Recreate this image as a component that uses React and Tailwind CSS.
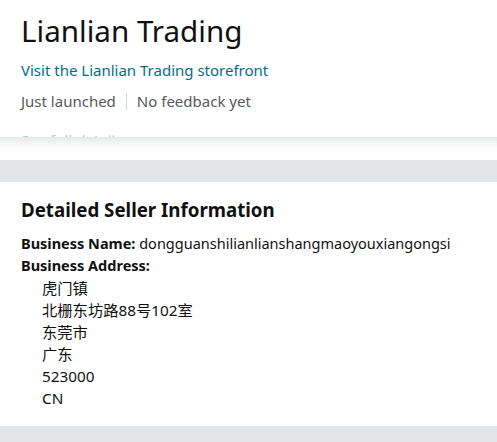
import React from 'react';

const font = { fontFamily: '"Noto Sans", "Noto Sans CJK SC", sans-serif' };

const addressLines = ['虎门镇', '北栅东坊路88号102室', '东莞市', '广东', '523000', 'CN'];

const App = () => {
  return (
    <div className="w-[497px] h-[442px] bg-[#e3e6e6] text-[#0f1111] overflow-hidden" style={font}>
      <div className="bg-white px-[21px] pt-[9px] h-[137px] overflow-hidden">
        <h1 className="text-[29.6px] leading-[44px] font-normal">Lianlian Trading</h1>
        <div className="mt-[7px] text-[15px] leading-[20px] text-[#007185]">
          Visit the Lianlian Trading storefront
        </div>
        <div className="mt-[11px] flex items-center text-[15px] leading-[20px] text-[#565959]">
          <span>Just launched</span>
          <span className="mx-[10px] h-[17px] w-px bg-[#d5d9d9]" />
          <span>No feedback yet</span>
        </div>
        <div className="mt-[19px] text-[15px] leading-[20px] text-[#a9cfd4]">See full details</div>
      </div>
      <div className="h-[23px] bg-gradient-to-b from-[#e7e8e8] via-white to-white" />
      <div className="h-[22px]" />
      <div className="bg-white px-[21px] pt-[14px] h-[244px]">
        <h3 className="text-[18.7px] leading-[28px] font-bold">Detailed Seller Information</h3>
        <div className="mt-[8px] text-[14.5px] leading-[22px]">
          <div>
            <span className="font-bold">Business Name:</span> dongguanshilianlianshangmaoyouxiangongsi
          </div>
          <div className="font-bold">Business Address:</div>
          <div className="pl-[21px] pt-[1px] text-[15.3px]">
            {addressLines.map((line) => (
              <div key={line}>{line}</div>
            ))}
          </div>
        </div>
      </div>
    </div>
  );
};

export default App;
